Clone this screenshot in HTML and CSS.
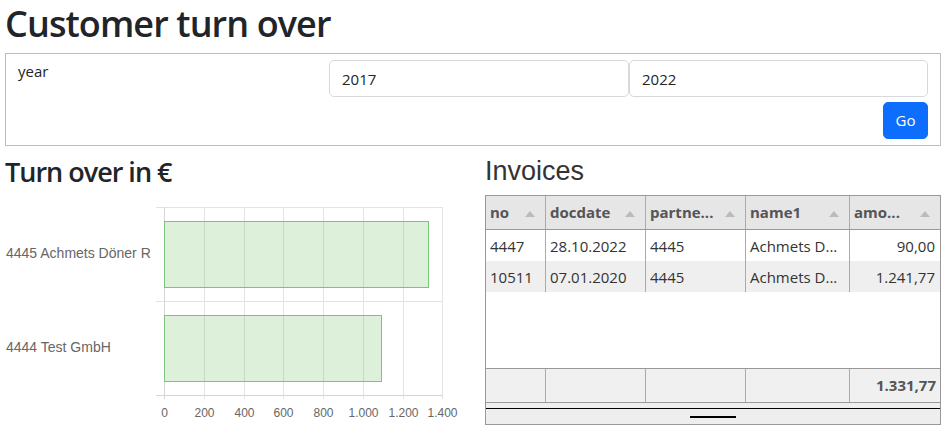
FILE: index.html
```html
<!DOCTYPE html>
<html lang="en">
<head>
<meta charset="utf-8">
<title>Customer turn over</title>
<link rel="stylesheet" href="styles.css">
</head>
<body>
<main class="page">
  <h1 class="title">Customer turn over</h1>
  <form class="filter">
    <label class="filter-label">year</label>
    <input class="field" type="text" value="2017">
    <input class="field" type="text" value="2022">
    <div class="actions"><button type="button" class="btn-go">Go</button></div>
  </form>
  <section class="panels">
    <div class="panel-chart">
      <h3 class="chart-title">Turn over in €</h3>
      <svg class="chart" width="480" height="236" viewBox="0 0 480 236" xmlns="http://www.w3.org/2000/svg">
        <g transform="translate(-5,-194)">
          <g stroke="#e3e3e3" stroke-width="1">
            <line x1="204.5" y1="208" x2="204.5" y2="400"/>
            <line x1="244.5" y1="208" x2="244.5" y2="400"/>
            <line x1="283.5" y1="208" x2="283.5" y2="400"/>
            <line x1="323.5" y1="208" x2="323.5" y2="400"/>
            <line x1="363.5" y1="208" x2="363.5" y2="400"/>
            <line x1="403.5" y1="208" x2="403.5" y2="400"/>
            <line x1="442.5" y1="208" x2="442.5" y2="400"/>
            <line x1="156" y1="208.5" x2="443" y2="208.5"/>
            <line x1="156" y1="302.5" x2="443" y2="302.5"/>
          </g>
          <line x1="164.5" y1="208" x2="164.5" y2="400" stroke="#d6d6d6"/>
          <line x1="156" y1="396.5" x2="443" y2="396.5" stroke="#d6d6d6"/>
          <rect x="164.5" y="222.5" width="264" height="66" fill="rgba(80,180,70,0.2)" stroke="#7cc476"/>
          <rect x="164.5" y="316.5" width="217" height="66" fill="rgba(80,180,70,0.2)" stroke="#7cc476"/>
          <g class="ylabels" font-family="'Liberation Sans', Arial, sans-serif" font-size="14" fill="#666">
            <text x="6" y="259">4445 Achmets Döner R</text>
            <text x="6" y="353">4444 Test GmbH</text>
          </g>
          <g class="xlabels" font-family="'Liberation Sans', Arial, sans-serif" font-size="12" fill="#666" text-anchor="middle">
            <text x="164.5" y="418">0</text>
            <text x="204.5" y="418">200</text>
            <text x="244.5" y="418">400</text>
            <text x="283.5" y="418">600</text>
            <text x="323.5" y="418">800</text>
            <text x="363.5" y="418">1.000</text>
            <text x="403.5" y="418">1.200</text>
            <text x="442.5" y="418">1.400</text>
          </g>
        </g>
      </svg>
    </div>
    <div class="panel-invoices">
      <h3 class="inv-title">Invoices</h3>
      <div class="grid-table">
        <div class="t-row t-head">
          <div class="hcell"><span>no</span><i class="arrow"></i></div>
          <div class="hcell"><span>docdate</span><i class="arrow"></i></div>
          <div class="hcell"><span>partne...</span><i class="arrow"></i></div>
          <div class="hcell"><span>name1</span><i class="arrow"></i></div>
          <div class="hcell"><span>amo...</span><i class="arrow"></i></div>
        </div>
        <div class="t-body">
          <div class="t-row b-row">
            <div class="cell">4447</div>
            <div class="cell">28.10.2022</div>
            <div class="cell">4445</div>
            <div class="cell">Achmets D...</div>
            <div class="cell num">90,00</div>
          </div>
          <div class="t-row b-row alt">
            <div class="cell">10511</div>
            <div class="cell">07.01.2020</div>
            <div class="cell">4445</div>
            <div class="cell">Achmets D...</div>
            <div class="cell num">1.241,77</div>
          </div>
        </div>
        <div class="t-row t-foot">
          <div class="fcell"></div>
          <div class="fcell"></div>
          <div class="fcell"></div>
          <div class="fcell"></div>
          <div class="fcell num">1.331,77</div>
        </div>
        <div class="t-scroll"><span class="thumb"></span></div>
      </div>
    </div>
  </section>
</main>
</body>
</html>
```
FILE: styles.css
```css
* { box-sizing: border-box; }
html, body { margin: 0; padding: 0; background: #fff; }
body {
  font-family: "Open Sans", "Noto Sans", sans-serif;
  font-size: 15px;
  line-height: 1.5;
  color: #212529;
}
.page { padding: 0 4px 0 5px; }

.title {
  margin: 2px 0 8px 0;
  font-size: 36px;
  line-height: 43px;
  font-weight: 600;
  letter-spacing: -0.9px;
  color: #212529;
}

.filter {
  border: 1px solid #bdbdbd;
  padding: 6px 12px;
  display: grid;
  grid-template-columns: 1fr 300px 299px;
  row-gap: 5px;
  margin: 0;
}
.filter-label { color: #212529; }
.field {
  font: inherit;
  font-size: 15px;
  color: #212529;
  height: 37px;
  padding: 6px 12px;
  border: 1px solid #d6d9dc;
  border-radius: 5px;
  background: #fff;
  width: 100%;
}
.actions { grid-column: 1 / -1; display: flex; justify-content: flex-end; }
.btn-go {
  font: inherit;
  font-size: 15px;
  height: 37px;
  width: 45px;
  padding: 0;
  color: #fff;
  background: #0d6efd;
  border: 1px solid #0d6efd;
  border-radius: 5px;
}

.panels {
  margin-top: 10px;
  display: grid;
  grid-template-columns: 480px 1fr;
}
.chart-title {
  margin: 0 0 5px 0;
  font-size: 27px;
  line-height: 32px;
  font-weight: 600;
  letter-spacing: -1px;
  color: #212529;
}
.chart { display: block; }

.inv-title {
  margin: 0 0 8px 0;
  font-family: "Liberation Sans", Arial, sans-serif;
  font-size: 27px;
  line-height: 31px;
  font-weight: 400;
  color: #333;
}

.grid-table {
  border: 1px solid #999;
  background: #fff;
  width: 456px;
}
.t-row {
  display: grid;
  grid-template-columns: 60px 100px 100px 104px 90px;
}
.t-head {
  background: #e6e6e6;
  border-bottom: 1px solid #999;
}
.hcell {
  height: 33px;
  padding: 0 4px;
  border-right: 1px solid #aaa;
  display: flex;
  align-items: center;
  justify-content: space-between;
  font-weight: 700;
  color: #555;
  white-space: nowrap;
  overflow: hidden;
}
.hcell:last-child, .cell:last-child, .fcell:last-child { border-right: none; }
.arrow {
  width: 0;
  height: 0;
  border-left: 5px solid transparent;
  border-right: 5px solid transparent;
  border-bottom: 6px solid #bbb;
  margin-right: 6px;
  margin-top: 3px;
}
.t-body { height: 138px; }
.b-row { height: 31px; }
.b-row.alt { background: #efefef; }
.cell {
  padding: 5px 4px 0 4px;
  border-right: 1px solid #aaa;
  color: #333;
  white-space: nowrap;
  overflow: hidden;
}
.num { text-align: right; padding-right: 5px; }
.t-foot {
  background: #f0f0f0;
  border-top: 1px solid #999;
  border-bottom: 1px solid #999;
}
.fcell {
  height: 33px;
  padding: 5px 4px 0 4px;
  border-right: 1px solid #aaa;
  font-weight: 700;
  color: #555;
}
.t-scroll {
  height: 21px;
  background: #eee;
  display: flex;
  flex-direction: column;
  align-items: center;
}
.t-scroll::before {
  content: "";
  display: block;
  align-self: stretch;
  margin-top: 5px;
  height: 1px;
  background: #000;
}
.thumb {
  display: block;
  margin-top: 7px;
  width: 46px;
  height: 2px;
  background: #000;
}
```
